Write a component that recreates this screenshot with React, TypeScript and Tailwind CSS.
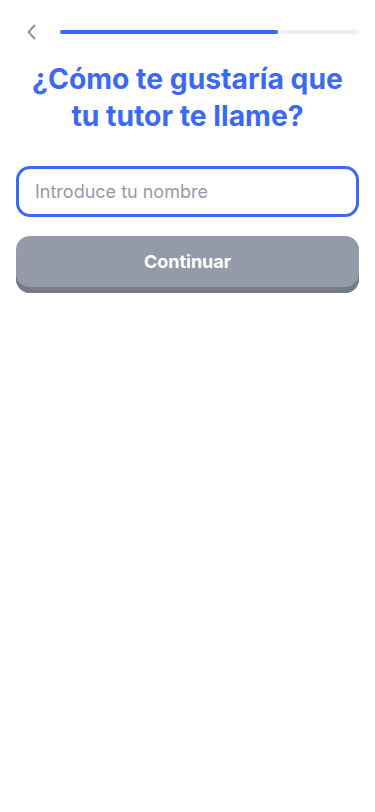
import React from "react";

export default function App() {
  return (
    <div className="min-h-[812px] w-[375px] bg-white" style={{ fontFamily: "Inter, 'Noto Sans', sans-serif" }}>
      <div className="flex items-center gap-[22px] pl-[24px] pr-[16px] pt-[22px]">
        <button className="flex h-[20px] w-[14px] items-center justify-center text-[#8e93a6]">
          <svg width="12" height="18" viewBox="0 0 12 18" fill="none">
            <path d="M9.5 2.5L3.5 9L9.5 15.5" stroke="currentColor" strokeWidth="2" strokeLinecap="round" strokeLinejoin="round" />
          </svg>
        </button>
        <div className="h-[4px] flex-1 rounded-full bg-[#eef0f5]">
          <div className="h-full w-[72.8%] rounded-full bg-[#3b69f6]" />
        </div>
      </div>
      <h1 className="mt-[19px] px-[16px] text-center text-[28.3px] font-bold leading-[37px] text-[#3b69f6]">
        ¿Cómo te gustaría que
        <br />
        tu tutor te llame?
      </h1>
      <div className="mt-[31px] px-[16px]">
        <div className="flex h-[51px] items-center rounded-[14px] border-[3px] border-[#3b69f6] px-[16px]">
          <input
            className="w-full bg-transparent text-[18px] text-[#1f2937] outline-none placeholder:text-[#959aab]"
            placeholder="Introduce tu nombre"
          />
        </div>
        <button className="mt-[19px] flex h-[57px] w-full items-center justify-center rounded-[14px] bg-[#959aab] pb-[6px] text-[18px] font-bold text-white shadow-[inset_0_-6px_0_#757a8a]">
          Continuar
        </button>
      </div>
    </div>
  );
}
